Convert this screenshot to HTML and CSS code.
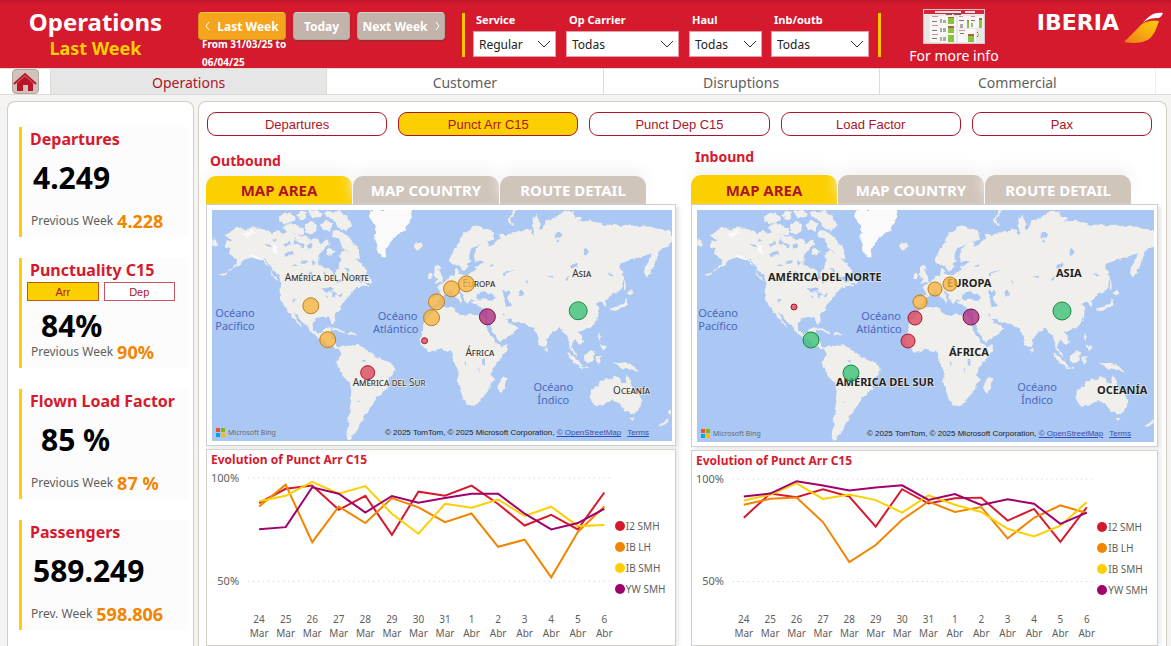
FILE: index.html
```html
<!DOCTYPE html>
<html lang="en">
<head>
<meta charset="utf-8">
<title>Operations - Last Week</title>
<link rel="stylesheet" href="styles.css">
</head>
<body>
<svg class="defs" aria-hidden="true">
  <defs>
    <filter id="coast" x="0" y="0" width="100%" height="100%">
      <feTurbulence type="fractalNoise" baseFrequency="0.16" numOctaves="2" seed="4" result="n"/>
      <feDisplacementMap in="SourceGraphic" in2="n" scale="5" xChannelSelector="R" yChannelSelector="G"/>
    </filter>
    <symbol id="chevron" viewBox="0 0 14 8"><path d="M1 1l6 6 6-6" fill="none" stroke="currentColor"/></symbol>
    <symbol id="bing" viewBox="0 0 9 9"><path fill="#f25022" d="M0 0h4v4H0z"/><path fill="#7fba00" d="M5 0h4v4H5z"/><path fill="#00a4ef" d="M0 5h4v4H0z"/><path fill="#ffb900" d="M5 5h4v4H5z"/></symbol>
    <symbol id="land" viewBox="0 0 1383 696">
      <g fill="#f0efeb">
        <g transform="translate(-21 -30)">
          <path d="M62 105L75 95 95 80 120 88 150 82 180 90 200 100 215 92 240 100 250 96 270 104 300 110 320 120 340 118 350 130 370 118 372 135 355 150 342 165 340 190 352 200 372 204 380 215 384 235 394 238 390 215 402 200 408 185 402 165 420 150 440 165 455 178 470 192 488 210 482 222 462 230 440 232 452 240 468 248 486 250 490 258 470 262 450 268 440 280 425 300 412 312 408 330 390 345 392 365 388 375 378 362 372 350 350 352 335 358 326 370 328 392 340 405 355 398 362 388 380 386 376 400 378 416 388 424 395 440 405 445 392 448 380 440 365 425 345 416 322 400 308 380 290 365 275 345 262 332 270 345 282 368 294 384 285 380 262 350 250 335 240 318 226 300 224 270 230 250 222 230 208 215 195 195 185 180 165 175 140 172 120 180 100 195 85 208 70 215 90 195 100 180 85 175 72 160 78 145 60 140 66 125 82 122 70 112Z"/>
          <path d="M22 118l14 4 6 12-20 4zM40 228l30-14-12 12zM222 50l18-12 20 2 10 14-12 14-20 4-14-8zM236 78l22-8 24 8 14 12 2 14-28 0-24-6zM274 42l18-8 14 6-4 16-18 2zM300 74l18-12 18 10-2 22-18 10-16-10zM312 34l22-3 18 6-8 14-22 4zM346 70l22-8 16 10-8 20-20 2zM358 34h44l26 14 14 28-20 18-22-12-14-22-20-8zM384 92l26 4 26 14 14 22 12 20 4 26-20-4-16-18-18-14-8-24-22-10zM362 152l14-8 14 8-6 14-18 2zM196 210l10 14 18 22-8-2-16-20zM474 228l22 6 4 16-20-2z"/>
          <path d="M365 384l24-1 28 10 8 8-20-4-20-6zM428 400l20-1 8 5-22 4zM404 409l12 1M626 140l10-10 16-2 6 8-10 12-14 4zM400 445L415 436 435 438 460 436 480 445 500 460 520 475 545 485 570 498 572 510 560 528 550 550 545 570 530 585 515 590 508 608 498 625 488 640 478 648 480 660 468 668 462 680 455 700 445 705 440 720 430 722 425 705 430 680 432 650 438 610 440 575 435 550 415 530 400 505 395 490 402 475 410 462Z"/>
          <path d="M690 202l8-8 8 8-4 10 8 12 8 14-4 10-22 4 6-12-8-14zM672 222l12-4 4 12-8 10-10-4z"/>
          <path fill="#fafafa" d="M491 28L625 28 620 55 605 75 600 95 575 105 560 120 548 145 540 170 528 168 520 150 510 120 515 95 505 70 495 50ZM110 104l30-12 14 6-26 14zM130 166l30 2 22 14 14 20-20-18-30-10zM204 134l8 4 6 26-10-4z"/>
        </g>
        <g transform="translate(684 -30)">
          <path d="M-32 295L-10 290 5 288 0 272-8 262 5 255 15 245 25 240 32 228 45 225 48 210 55 205 58 222 75 225 95 220 110 205 105 198 115 195 130 190 138 185 125 182 108 185 103 172 110 150 118 135 105 140 95 155 88 165 92 180 85 200 72 212 62 200 50 192 38 195 30 178 38 160 50 140 65 115 80 95 100 82 120 78 135 85 150 90 160 100 165 115 150 125 140 122 148 140 160 135 170 120 182 118 180 105 200 105 220 98 240 92 255 92 262 85 275 95 280 110 285 100 275 80 285 55 292 45 300 60 305 90 315 80 318 65 335 60 350 50 370 38 385 32 400 34 410 50 430 55 420 65 450 62 480 68 500 75 530 72 550 78 570 72 600 78 620 75 650 85 680 90 702 95V128L690 140 670 145 655 160 650 180 645 200 635 225 622 235 615 215 620 195 632 178 640 160 620 165 600 175 570 182 548 190 540 205 552 215 555 240 545 265 530 280 510 290 500 300 505 315 498 325 490 312 480 305 470 310 480 325 478 345 470 370 450 385 430 392 420 395 425 410 432 425 425 435 410 430 405 420 400 425 398 440 405 455 412 470 405 465 395 445 390 425 380 405 372 392 360 385 350 392 335 405 322 420 318 440 310 445 300 425 292 400 285 385 270 378 250 372 235 370 220 365 210 355 200 355 205 368 222 375 238 385 225 400 205 412 180 425 174 420 167 403 156 385 145 365 143 350 145 338 140 325 120 322 105 318 98 305 108 298 95 298 88 315 78 305 68 290 62 278 50 268 58 285 70 300 62 312 55 300 40 285 32 272 18 278 8 290 0 300-10 315-28 318-32 310Z"/>
          <path d="M-12 322L5 322 30 320 45 322 48 338 65 345 80 348 90 340 115 345 128 348 134 356 138 372 148 394 158 415 168 430 185 438 205 435 200 455 185 475 170 492 160 505 158 525 165 540 150 560 145 575 130 595 115 612 95 620 82 618 75 600 65 580 55 550 60 530 52 505 45 490 42 470 30 455 10 448-5 452-25 458-40 450-55 435-60 420-55 405-50 385-40 360-25 345Z"/>
          <path d="M195 530L202 540 195 565 185 580 178 572 178 550ZM318 446l8 4-2 8-8-4zM383 455L395 462 415 480 430 495 425 502 405 490 390 470ZM424 502l22 2 0 5-22-2zM435 470L455 455 468 460 462 485 445 490 435 482ZM472 470l14-2-8 8 6 12-8 6zM478 400l8 10 0 16-8-8zM486 434l14 4-4 12-10-6zM520 488L540 490 560 488 580 500 600 512 585 514 565 505 548 510 535 495ZM455 570L475 560 485 545 500 535 510 540 525 530 540 533 550 550 560 550 565 525 572 540 578 560 595 580 608 600 605 620 595 638 575 640 555 630 545 615 520 600 490 618 465 620 455 600ZM572 654l14 0-5 12zM692 632l10 4-4 12-8-2zM690 656l-4 12-18 14-7-6 16-10zM512 330l14-8 16-2 16-12 2-14 8 2-4 18-16 12-20 8zM560 280l14-8 10 6-14 8zM556 238l4 16-2 18-4-10zM232 30l-12 16-6 16 8 16-8-2-6-14 8-20 8-12z"/>
        </g>
      </g>
      <g fill="#abc7f3">
        <path transform="translate(684 -30)" d="M108 285L120 277 135 274 150 282 168 290 160 299 135 299 115 300ZM190 275L205 270 213 282 206 294 218 318 200 322 195 300ZM238 276l12-4 2 14-8 4zM346 102l10-10 14 8-4 12-18 4zM350 124l8-6 2 10zM392 196l18-6 4 12-18 4zM430 150l6-4 10 12-6 12-4-8zM326 230l14-6 2 10zM378 238l12-8-6 14zM498 220l16-2 10 6-14 2zM188 222l22-10 20-2-20 6-14 10zM148 200l12-8 4 8zM260 240l4 16-6-4zM128 478l8-2 0 22-8-4zM118 500l3 20-5-8zM74 484l6 4-2 12zM102 540l4 4M192 340l6 8-8-2z"/>
        <path transform="translate(-21 -30)" d="M352 268l20-8 16 6-10 8-16 0zM364 276l6 18-8 0zM382 272l14 8-6 14-6-8zM398 288l16-6-6 10zM262 196l12-4 6 4-14 6zM200 120l12-4 4 6-14 4zM182 132l16 4 2 6-14-4zM234 134l22-8 2 6-18 10zM240 160l24-4 6 6-24 8zM286 186l14-6 10 4-14 8zM310 224l6-10 6 4-6 20zM262 304l8-6 6 2-10 8zM272 110l4 18 24 6-4 8-30-10zM304 140l12-14 6 16-10 8zM322 178l14 8-8 12zM356 214l10 10-10 10zM396 244l12-6 4 10-12 2zM418 206l20 4-8 10zM470 482l14-2-6 8zM462 602l5 5-6 0z"/>
      </g>
    </symbol>
  </defs>
</svg>

<header class="topbar">
  <div class="brand">
    <h1>Operations</h1>
    <p>Last Week</p>
  </div>
  <div class="period">
    <div class="period-buttons">
      <button class="week week-active" type="button"><svg viewBox="0 0 5 10"><path d="M4 1L1 5l3 4"/></svg>Last Week</button>
      <button class="week" type="button">Today</button>
      <button class="week" type="button">Next Week<svg viewBox="0 0 5 10"><path d="M1 1l3 4-3 4"/></svg></button>
    </div>
    <p class="range">From 31/03/25 to 06/04/25</p>
  </div>
  <div class="filters">
    <div class="filter filter-service"><label for="service">Service</label><svg class="hint"><use href="#chevron"/></svg><select id="service"><option>Regular</option></select><svg class="arrow"><use href="#chevron"/></svg></div>
    <div class="filter filter-carrier"><label for="carrier">Op Carrier</label><svg class="hint"><use href="#chevron"/></svg><select id="carrier"><option>Todas</option></select><svg class="arrow"><use href="#chevron"/></svg></div>
    <div class="filter filter-haul"><label for="haul">Haul</label><svg class="hint"><use href="#chevron"/></svg><select id="haul"><option>Todas</option></select><svg class="arrow"><use href="#chevron"/></svg></div>
    <div class="filter filter-direction"><label for="direction">Inb/outb</label><svg class="hint"><use href="#chevron"/></svg><select id="direction"><option>Todas</option></select><svg class="arrow"><use href="#chevron"/></svg></div>
  </div>
  <a class="info" href="#info">
    <svg viewBox="0 0 62 35">
      <rect width="62" height="35" fill="#e3c4c6"/><rect x="1" y="1" width="60" height="33" fill="#e9e7e5"/>
      <path fill="#d6263a" d="M1 1h60v4H1z"/><path fill="#f6dfe1" d="M12 2h26v2H12zM42 2h10v2H42z"/>
      <path fill="#8c4a4f" d="M23 4h6v2h-6zM31 4h7v2h-7z"/>
      <path fill="#f8f7f6" d="M7 7h26v26H7zM35 7h25v12H35zM35 20h18v13H35z"/>
      <path fill="#dd8b93" d="M9 7h6v1H9zM9 16h6v1H9zM9 25h6v1H9zM36 7h4v1h-4zM48 7h4v1h-4zM36 21h6v1h-6z"/>
      <path fill="#777" d="M9 12h5v1H9zM9 21h5v1H9zM9 29h5v1H9zM36 11h5v1h-5zM48 11h4v1h-4zM37 24h4v1h-4z"/>
      <path fill="#aaa" d="M17 10h2v4h-2zM20 11h3v3h-3zM17 19h2v4h-2zM20 19h3v4h-3zM17 28h2v4h-2zM20 28h3v4h-3zM37 15h3v4h-3zM48 14h2v4h-2z"/>
      <path fill="#86c440" d="M25 8h6v7h-6zM25 17h6v7h-6zM25 26h6v7h-6zM44 12h2v7h-2zM56 10h3v9h-3zM45 26h6v7h-6zM55 25h1v2h-1z"/>
      <path fill="#b0603a" d="M25 8h6v1h-6zM25 17h6v2h-6zM44 11h2v1h-2zM56 9h3v2h-3zM45 25h6v2h-6z"/>
      <path fill="#d6263a" d="M54 23h1v1h-1zM54 27h1v1h-1z"/>
    </svg>
    <span>For more info</span>
  </a>
  <div class="logo">
    <span>IBERIA</span>
    <svg viewBox="0 0 40 32">
      <defs><linearGradient id="tail" x1="0" y1="1" x2="1" y2="0"><stop offset="0" stop-color="#ec7a12"/><stop offset=".5" stop-color="#f8a912"/><stop offset="1" stop-color="#fccb08"/></linearGradient></defs>
      <path fill="#fff" d="M39 1C31 0 25 3 19 11c4-4 9-5 16-5 2-1 3-3 4-5z"/>
      <path fill="url(#tail)" d="M35 9c-10-1-16 1-20 6L0 30c12 2 23 1 28-6 4-5 5-10 7-15z"/>
    </svg>
  </div>
</header>

<nav class="pages">
  <div class="home-cell">
    <a class="home" href="#home" aria-label="Home"><svg viewBox="0 0 24 20"><path fill="#bb1429" d="M12 4l8 7v8h-5v-6h-5v6H4v-8z"/><path fill="none" stroke="#bb1429" stroke-width="2" d="M1 12L12 2l11 10"/></svg></a>
  </div>
  <a class="page page-active" href="#operations">Operations</a>
  <a class="page" href="#customer">Customer</a>
  <a class="page" href="#disruptions">Disruptions</a>
  <a class="page" href="#commercial">Commercial</a>
  <div class="page-end"></div>
</nav>

<main class="board">
  <aside class="panel kpis">
    <section class="kpi">
      <h2>Departures</h2>
      <p class="value">4.249</p>
      <p class="previous">Previous Week <b>4.228</b></p>
    </section>
    <section class="kpi kpi-inset">
      <h2>Punctuality C15</h2>
      <div class="toggle"><button class="on" type="button">Arr</button><button type="button">Dep</button></div>
      <p class="value">84%</p>
      <p class="previous">Previous Week <b>90%</b></p>
    </section>
    <section class="kpi kpi-inset">
      <h2>Flown Load Factor</h2>
      <p class="value">85 %</p>
      <p class="previous">Previous Week <b>87 %</b></p>
    </section>
    <section class="kpi">
      <h2>Passengers</h2>
      <p class="value">589.249</p>
      <p class="previous">Prev. Week <b>598.806</b></p>
    </section>
  </aside>

  <section class="panel detail">
    <div class="metrics">
      <button type="button">Departures</button>
      <button class="on" type="button">Punct Arr C15</button>
      <button type="button">Punct Dep C15</button>
      <button type="button">Load Factor</button>
      <button type="button">Pax</button>
    </div>
    <div class="columns">
      <section class="flow flow-out">
        <h2>Outbound</h2>
        <div class="tabs"><button class="on" type="button">MAP AREA</button><button type="button">MAP COUNTRY</button><button type="button">ROUTE DETAIL</button></div>
        <div class="map">
          <svg class="world" viewBox="0 0 461 232">
            <use href="#land" width="461" height="232" filter="url(#coast)"/>
            <g class="region region-small">
              <text x="73" y="71">América del Norte</text>
              <text x="141" y="176">América del Sur</text>
              <text x="251" y="77">Europa</text>
              <text x="361" y="67">Asia</text>
              <text x="254" y="146">África</text>
              <text x="402" y="184">Oceanía</text>
            </g>
            <g class="ocean">
              <text x="23" y="107">Océano</text><text x="23" y="120">Pacífico</text>
              <text x="186" y="110">Océano</text><text x="184" y="123">Atlántico</text>
              <text x="342" y="181">Océano</text><text x="342" y="194">Índico</text>
            </g>
            <g class="amber"><circle cx="99" cy="96" r="8"/><circle cx="116" cy="130" r="8"/><circle cx="220" cy="108" r="8"/><circle cx="225" cy="92" r="8"/><circle cx="240" cy="79" r="8"/><circle cx="255" cy="74" r="8"/></g>
            <g class="red"><circle cx="156" cy="163" r="7"/><circle cx="213" cy="131" r="3"/></g>
            <circle class="purple" cx="276" cy="107" r="8"/>
            <circle class="green" cx="367" cy="101" r="9"/>
          </svg>
          <div class="credits">
            <span class="bing"><svg><use href="#bing"/></svg>Microsoft Bing</span>
            <span class="rights">© 2025 TomTom, © 2025 Microsoft Corporation, <a href="#osm">© OpenStreetMap</a><a href="#terms">Terms</a></span>
          </div>
        </div>
        <div class="evolution">
          <h3>Evolution of Punct Arr C15</h3>
          <div class="evolution-body">
            <svg class="chart" data-series="outbound" viewBox="0 0 407 172"></svg>
            <ul class="legend"><li class="i2">I2 SMH</li><li class="lh">IB LH</li><li class="ib">IB SMH</li><li class="yw">YW SMH</li></ul>
          </div>
        </div>
      </section>

      <section class="flow flow-in">
        <h2>Inbound</h2>
        <div class="tabs"><button class="on" type="button">MAP AREA</button><button type="button">MAP COUNTRY</button><button type="button">ROUTE DETAIL</button></div>
        <div class="map">
          <svg class="world" viewBox="0 0 457 232">
            <use href="#land" width="461" height="232" filter="url(#coast)"/>
            <g class="region region-bold">
              <text x="71" y="71">AMÉRICA DEL NORTE</text>
              <text x="139" y="176">AMÉRICA DEL SUR</text>
              <text x="250" y="77">EUROPA</text>
              <text x="359" y="67">ASIA</text>
              <text x="252" y="146">ÁFRICA</text>
              <text x="400" y="184">OCEANÍA</text>
            </g>
            <g class="ocean">
              <text x="21" y="107">Océano</text><text x="21" y="120">Pacífico</text>
              <text x="184" y="110">Océano</text><text x="182" y="123">Atlántico</text>
              <text x="340" y="181">Océano</text><text x="340" y="194">Índico</text>
            </g>
            <g class="amber"><circle cx="223" cy="92" r="7"/><circle cx="238" cy="79" r="7"/><circle cx="253" cy="74" r="7"/></g>
            <g class="red"><circle cx="97" cy="97" r="3"/><circle cx="211" cy="131" r="7"/><circle cx="218" cy="108" r="7"/></g>
            <circle class="purple" cx="274" cy="107" r="8"/>
            <g class="green"><circle cx="114" cy="130" r="8"/><circle cx="154" cy="163" r="8"/><circle cx="365" cy="101" r="9"/></g>
          </svg>
          <div class="credits">
            <span class="bing"><svg><use href="#bing"/></svg>Microsoft Bing</span>
            <span class="rights">© 2025 TomTom, © 2025 Microsoft Corporation, <a href="#osm">© OpenStreetMap</a><a href="#terms">Terms</a></span>
          </div>
        </div>
        <div class="evolution">
          <h3>Evolution of Punct Arr C15</h3>
          <div class="evolution-body">
            <svg class="chart" data-series="inbound" viewBox="0 0 407 172"></svg>
            <ul class="legend"><li class="i2">I2 SMH</li><li class="lh">IB LH</li><li class="ib">IB SMH</li><li class="yw">YW SMH</li></ul>
          </div>
        </div>
      </section>
    </div>
  </section>
</main>
<script src="charts.js"></script>
</body>
</html>
```
FILE: styles.css
```css
* { box-sizing: border-box; }
body {
  margin: 0;
  min-height: 100vh;
  display: flex;
  flex-direction: column;
  overflow-x: hidden;
  background: #f5f4f2;
  font-family: "Noto Sans", "Open Sans", sans-serif;
  color: #605e5c;
}
h1, h2, h3, p, ul { margin: 0; padding: 0; }
button, select { font: inherit; cursor: pointer; }
button { padding: 0; }
a { color: inherit; text-decoration: none; }
.defs { position: absolute; width: 0; height: 0; }

/* Header */
.topbar {
  display: flex;
  height: 68px;
  background: linear-gradient(#c01528, #d61a2e 5px);
  color: #fff;
}
.brand { width: 191px; padding-top: 6px; text-align: center; }
.brand h1 { font-size: 24px; line-height: 32px; }
.brand p { font-size: 18px; line-height: 20px; font-weight: 700; color: #fcd000; }
.period { margin-left: 7px; padding-top: 12px; }
.period-buttons { display: flex; gap: 7px; }
.week {
  display: flex;
  align-items: center;
  justify-content: center;
  gap: 7px;
  width: 88px;
  height: 28px;
  border: 1px solid #b3a69c;
  border-top-color: #dccfc8;
  border-radius: 4px;
  background: #c2b4aa;
  color: #fff;
  font-size: 12px;
  font-weight: 700;
  box-shadow: 0 1px 2px #8a3030;
}
.week:nth-child(2) { width: 57px; }
.week-active { background: #f5a51d; border-color: #e0901a; border-top-color: #fbc840; }
.week svg { width: 5px; height: 10px; fill: none; stroke: currentColor; }
.range { width: 100px; margin-left: 4px; margin-top: -5px; font-size: 10px; line-height: 18px; font-weight: 700; }
.filters {
  display: flex;
  gap: 10px;
  height: 44px;
  margin: 13px 0 0 17px;
  padding: 0 9px 0 8px;
  border: solid #fcc400;
  border-width: 0 3px;
}
.filter { position: relative; display: flex; flex-direction: column; gap: 5px; font-size: 11px; }
.filter label { height: 13px; padding-left: 3px; line-height: 13px; font-weight: 700; }
.filter select {
  width: 100%;
  height: 26px;
  padding: 0 5px;
  appearance: none;
  border: 1px solid #e4a0a6;
  border-radius: 0;
  background: #fff;
  color: #222;
  font-size: 12px;
}
.filter-service { width: 83px; }
.filter-carrier { width: 113px; }
.filter-haul { width: 73px; margin-right: -1px; }
.filter-direction { width: 98px; }
.arrow, .hint { position: absolute; pointer-events: none; }
.arrow { right: 5px; bottom: 9px; width: 14px; height: 8px; color: #333; }
.hint { right: 3px; top: 2px; width: 8px; height: 5px; color: #a63a44; }
.info {
  display: flex;
  flex-direction: column;
  align-items: center;
  width: 92px;
  margin-left: 27px;
  padding-top: 9px;
  font-size: 14px;
  line-height: 24px;
  white-space: nowrap;
}
.info svg { width: 62px; height: 35px; }
.logo { display: flex; margin-left: auto; padding: 9px 7px 0 0; }
.logo span { font: 700 22px/27px "DejaVu Sans", sans-serif; }
.logo svg { width: 40px; height: 32px; margin: 3px 0 0 5px; }

/* Page navigation */
.pages {
  display: flex;
  height: 27px;
  border: solid #dfdad5;
  border-width: 1px 0 1px;
  background: #fff;
}
.home-cell { width: 50px; display: flex; justify-content: center; }
.home {
  display: flex;
  align-items: center;
  justify-content: center;
  width: 27px;
  height: 25px;
  border: 1px solid #b3a69c;
  border-radius: 4px;
  background: #d0c3ba;
}
.home svg { width: 24px; height: 20px; }
.page {
  flex: 1;
  border-left: 1px solid #dfdad5;
  font-size: 14px;
  line-height: 27px;
  text-align: center;
}
.page-active { background: #e6e6e6; color: #ad1429; }
.page-end { width: 16px; border-left: 1px solid #eee; }

/* Board */
.board {
  flex: 1;
  display: grid;
  grid-template-columns: 187px 1fr;
  gap: 4px;
  padding: 6px 4px 0 7px;
}
.panel {
  border: 1px solid #d5cdc2;
  border-bottom: 0;
  border-radius: 8px 8px 0 0;
  background: #fff;
}
.kpis { display: flex; flex-direction: column; gap: 21px; padding: 25px 5px 0 11px; }
.kpi {
  display: flex;
  flex-direction: column;
  height: 110px;
  padding: 0 0 4px 8px;
  border-left: 3px solid #fcd000;
  background: #fcfcfc;
}
.kpi h2 { font-size: 16px; line-height: 24px; color: #d61a2e; white-space: nowrap; }
.kpi .value { margin-top: 13px; padding-left: 3px; font-size: 30px; line-height: 28px; font-weight: 700; color: #000; }
.kpi-inset .value { padding-left: 11px; }
.toggle + .value { margin-top: 11px; }
.previous { display: flex; gap: 4px; margin-top: auto; padding-left: 1px; font-size: 12px; line-height: 24px; white-space: nowrap; }
.previous b { font-size: 18px; color: #f28500; }
.toggle { display: flex; gap: 5px; margin: 0 13px 0 -3px; }
.toggle button {
  flex: 1;
  height: 19px;
  border: 1px solid #c65563;
  background: #fff;
  color: #ad1429;
  font: 11px "Liberation Sans", sans-serif;
}
.toggle .on { background: #fcd000; border-color: #c0561c; }

.detail { padding: 10px 8px 0 7px; }
.metrics { display: flex; gap: 11px; padding: 0 6px 0 1px; }
.metrics button {
  flex: 1;
  height: 24px;
  border: 1px solid #ad1429;
  border-radius: 9px;
  background: #fff;
  color: #ad1429;
  font: 13px "Liberation Sans", sans-serif;
}
.metrics .on { background: #fcd000; }
.columns { display: grid; grid-template-columns: 470fr 467fr; gap: 15px; padding-top: 11px; }
.flow { display: flex; flex-direction: column; }
.flow h2 { position: relative; z-index: 1; padding-left: 4px; font-size: 14px; line-height: 20px; color: #d61a2e; }
.flow-out h2 { padding-top: 4px; }
.tabs { display: flex; align-items: flex-end; gap: 1px; height: 33px; }
.flow-in .tabs { height: 37px; }
.tabs button {
  width: 146px;
  height: 28px;
  border: 0;
  border-radius: 10px 10px 0 0;
  background: #d0c5bb;
  color: #fff;
  font-size: 15px;
  font-weight: 700;
  box-shadow: 0 -8px 14px #f4f4f4;
}
.flow-in .tabs button { height: 29px; }
.tabs .on { background: #fcd000; color: #ad1429; }
.map {
  position: relative;
  padding: 5px 3px 4px 5px;
  border: 1px solid #cfcfcf;
  background: #fff;
  box-shadow: 3px 2px 4px #e6e6e6;
}
.world { display: block; width: 100%; background: #abc7f3; }
.region text { fill: #333; paint-order: stroke; stroke: #f4f4f0; stroke-width: 1px; font-size: 10px; }
.region-small text { font-variant: small-caps; }
.region-bold text { font-size: 11px; font-weight: 700; fill: #222; }
.ocean text { fill: #4a68c0; font-size: 11px; text-anchor: middle; }
.world .amber { fill: #f5b544; fill-opacity: .8; stroke: #c47a14; }
.world .red { fill: #dc4a5c; fill-opacity: .8; stroke: #a81428; }
.world .purple { fill: #b03080; fill-opacity: .8; stroke: #7a1450; }
.world .green { fill: #3cc07a; fill-opacity: .8; stroke: #1a8a3c; }
.credits {
  position: absolute;
  left: 9px;
  right: 26px;
  bottom: 8px;
  display: flex;
  align-items: center;
  justify-content: space-between;
  white-space: nowrap;
}
.bing { display: flex; align-items: center; gap: 3px; font-size: 7px; color: #6a6a6a; }
.bing svg { width: 9px; height: 9px; }
.rights { font: 8px "Liberation Sans", sans-serif; color: #222; }
.rights a { margin-right: 6px; color: #3450b0; text-decoration: underline; }
.rights a:last-child { margin-right: 0; }

.evolution { flex: 1; margin-top: 3px; border: 1px solid #d5cdc2; background: #fff; box-shadow: 3px 0 4px #ececec; }
.evolution h3 { padding-left: 4px; font-size: 12px; line-height: 20px; color: #d61a2e; }
.evolution-body { display: grid; grid-template-columns: 407fr 60fr; padding-bottom: 2px; }
.chart { display: block; width: 100%; }
.chart text { fill: #605e5c; font-size: 10px; text-anchor: middle; }
.chart .percent { font-size: 11px; text-anchor: end; }
.chart line { stroke: #ccc; stroke-dasharray: 1 4; }
.chart polyline { fill: none; stroke-width: 2px; }
.legend { list-style: none; padding-top: 45px; font-size: 10px; white-space: nowrap; }
.legend li { display: flex; align-items: center; gap: 1px; height: 21px; }
.legend li::before { content: ""; width: 10px; height: 10px; border-radius: 50%; background: currentColor; }
.legend .i2::before { background: #d61a2e; }
.legend .lh::before { background: #f28500; }
.legend .ib::before { background: #fcd000; }
.legend .yw::before { background: #a0006a; }
```
FILE: charts.js
```js
const days = ["24 Mar", "25 Mar", "26 Mar", "27 Mar", "28 Mar", "29 Mar", "30 Mar", "31 Mar",
  "1 Abr", "2 Abr", "3 Abr", "4 Abr", "5 Abr", "6 Abr"];
const colors = ["#d61a2e", "#f28500", "#fcd000", "#a0006a"];
const data = {
  outbound: [
    [87.9, 94.8, 96.4, 84.6, 91.4, 72.5, 93.4, 91.4, 96.3, 87.4, 77, 82.2, 75.1, 93],
    [86.2, 96.8, 68.9, 86.2, 78.2, 90.3, 85.8, 78.6, 82.8, 66.7, 70.1, 51.9, 73.8, 86.2],
    [88.7, 91.4, 98.1, 92.4, 96.1, 82.7, 73, 87.5, 85.6, 89.6, 81.6, 86.1, 76.7, 77.2],
    [75.2, 76.2, 95.5, 92.4, 83.3, 91.3, 88, 90.3, 92.4, 92.4, 82.7, 75.1, 78.2, 85.1]
  ],
  inbound: [
    [81.1, 92.9, 91.1, 95, 91.4, 76.8, 95, 88, 90.6, 90.9, 79.7, 85.4, 69.3, 86.2],
    [87.4, 90.3, 90.9, 79, 59.5, 67.8, 80.1, 89, 83.9, 86.3, 71, 81.1, 87.1, 83.4],
    [89.5, 92.3, 97.9, 90.3, 92.4, 89.7, 83.6, 92, 87.4, 83.9, 75.7, 72, 77.2, 88.7],
    [91.4, 92.9, 98.9, 96.8, 94.4, 95.8, 96.9, 89.8, 92.6, 87.3, 90.1, 87.9, 78.1, 83.6]
  ]
};
const x = i => 52 + i * 26.5;
const y = v => 8 + (100 - v) * 2.06;

document.querySelectorAll(".chart").forEach(chart => {
  let out = "";
  for (const level of [100, 50]) {
    out += `<line x1="41" x2="405" y1="${y(level)}" y2="${y(level)}"/>`;
    out += `<text class="percent" x="32" y="${y(level) + 4}">${level}%</text>`;
  }
  days.forEach((day, i) => {
    const [number, month] = day.split(" ");
    out += `<text x="${x(i)}" y="153">${number}</text><text x="${x(i)}" y="167">${month}</text>`;
  });
  data[chart.dataset.series].forEach((values, k) => {
    out += `<polyline stroke="${colors[k]}" points="${values.map((v, i) => x(i) + "," + y(v)).join(" ")}"/>`;
  });
  chart.innerHTML = out;
});
```
